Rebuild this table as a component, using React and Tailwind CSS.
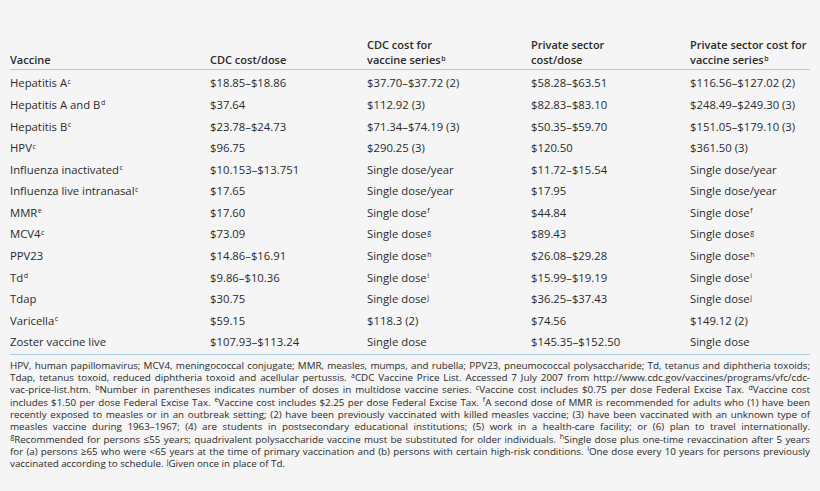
import React from "react";

const rows = [
  ["Hepatitis A", "c", "$18.85–$18.86", ["$37.70–$37.72 (2)"], "$58.28–$63.51", ["$116.56–$127.02 (2)"]],
  ["Hepatitis A and B", "d", "$37.64", ["$112.92 (3)"], "$82.83–$83.10", ["$248.49–$249.30 (3)"]],
  ["Hepatitis B", "c", "$23.78–$24.73", ["$71.34–$74.19 (3)"], "$50.35–$59.70", ["$151.05–$179.10 (3)"]],
  ["HPV", "c", "$96.75", ["$290.25 (3)"], "$120.50", ["$361.50 (3)"]],
  ["Influenza inactivated", "c", "$10.153–$13.751", ["Single dose/year"], "$11.72–$15.54", ["Single dose/year"]],
  ["Influenza live intranasal", "c", "$17.65", ["Single dose/year"], "$17.95", ["Single dose/year"]],
  ["MMR", "e", "$17.60", ["Single dose", "f"], "$44.84", ["Single dose", "f"]],
  ["MCV4", "c", "$73.09", ["Single dose", "g"], "$89.43", ["Single dose", "g"]],
  ["PPV23", "", "$14.86–$16.91", ["Single dose", "h"], "$26.08–$29.28", ["Single dose", "h"]],
  ["Td", "d", "$9.86–$10.36", ["Single dose", "i"], "$15.99–$19.19", ["Single dose", "i"]],
  ["Tdap", "", "$30.75", ["Single dose", "j"], "$36.25–$37.43", ["Single dose", "j"]],
  ["Varicella", "c", "$59.15", ["$118.3 (2)"], "$74.56", ["$149.12 (2)"]],
  ["Zoster vaccine live", "", "$107.93–$113.24", ["Single dose"], "$145.35–$152.50", ["Single dose"]],
];

// preflight already lifts <sup> by half its own size
const Sup = ({ children }) => <sup className="text-[7px] ml-[0.5px]">{children}</sup>;

const Cell = ({ v }) => (
  <div className="whitespace-nowrap">
    {v[0]}
    {v[1] ? <Sup>{v[1]}</Sup> : null}
  </div>
);

const notes = [
  <>HPV, human papillomavirus; MCV4, meningococcal conjugate; MMR, measles, mumps, and rubella; PPV23, pneumococcal polysaccharide; Td, tetanus and diphtheria toxoids;</>,
  <>Tdap, tetanus toxoid, reduced diphtheria toxoid and acellular pertussis. <Sup>a</Sup>CDC Vaccine Price List. Accessed 7 July 2007 from http://www.cdc.gov/vaccines/programs/vfc/cdc-</>,
  <>vac-price-list.htm. <Sup>b</Sup>Number in parentheses indicates number of doses in multidose vaccine series. <Sup>c</Sup>Vaccine cost includes $0.75 per dose Federal Excise Tax. <Sup>d</Sup>Vaccine cost</>,
  <>includes $1.50 per dose Federal Excise Tax. <Sup>e</Sup>Vaccine cost includes $2.25 per dose Federal Excise Tax. <Sup>f</Sup>A second dose of MMR is recommended for adults who (1) have been</>,
  <>recently exposed to measles or in an outbreak setting; (2) have been previously vaccinated with killed measles vaccine; (3) have been vaccinated with an unknown type of</>,
  <>measles vaccine during 1963–1967; (4) are students in postsecondary educational institutions; (5) work in a health-care facility; or (6) plan to travel internationally.</>,
  <><Sup>g</Sup>Recommended for persons ≤55 years; quadrivalent polysaccharide vaccine must be substituted for older individuals. <Sup>h</Sup>Single dose plus one-time revaccination after 5 years</>,
  <>for (a) persons ≥65 who were &lt;65 years at the time of primary vaccination and (b) persons with certain high-risk conditions. <Sup>i</Sup>One dose every 10 years for persons previously</>,
];

const App = () => {
  return (
    <div className="w-[820px] h-[491px] bg-[#f5f5f5] text-[#2a2a2a] px-[10px] pt-[37px] font-['Open_Sans',sans-serif] overflow-hidden">
      {/* header */}
      <div className="grid grid-cols-[200px_157px_164px_159px_1fr] text-[11px] leading-[15px] font-semibold items-end pb-[2px] border-b-[1.5px] border-[#a9cfe0] whitespace-nowrap">
        <div>Vaccine</div>
        <div>CDC cost/dose</div>
        <div>
          CDC cost for
          <br />
          vaccine series<Sup>b</Sup>
        </div>
        <div>
          Private sector
          <br />
          cost/dose
        </div>
        <div>
          Private sector cost for
          <br />
          vaccine series<Sup>b</Sup>
        </div>
      </div>

      {/* body */}
      <div className="pt-[3px] border-b-[1.5px] border-[#a9cfe0]">
        {rows.map((r) => (
          <div
            key={r[0]}
            className="grid grid-cols-[200px_157px_164px_159px_1fr] text-[11.3px] h-[21.6px] items-center"
          >
            <Cell v={[r[0], r[1]]} />
            <Cell v={[r[2]]} />
            <Cell v={r[3]} />
            <Cell v={[r[4]]} />
            <Cell v={r[5]} />
          </div>
        ))}
      </div>

      {/* footnotes */}
      <div className="pt-[5px] text-[9.8px] leading-[12px]">
        {notes.map((n, i) => (
          <div key={i} className="h-[12.3px] text-justify [text-align-last:justify] whitespace-nowrap">
            {n}
          </div>
        ))}
        <div className="h-[12.3px]">
          vaccinated according to schedule. <Sup>j</Sup>Given once in place of Td.
        </div>
      </div>
    </div>
  );
};

export default App;
